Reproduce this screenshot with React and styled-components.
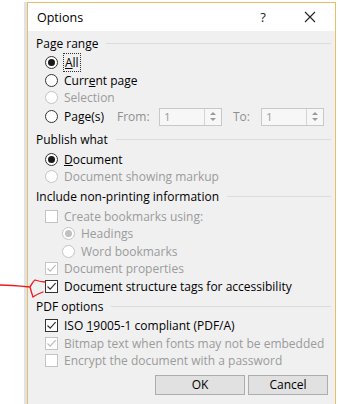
import React from "react";
import styled, { createGlobalStyle } from "styled-components";

const Global = createGlobalStyle`
  html, body {
    margin: 0;
    background: #ffffff;
    font-family: "Open Sans", "Noto Sans", sans-serif;
  }
`;

const Page = styled.div`
  position: relative;
  width: 339px;
  height: 404px;
  overflow: hidden;
  padding: 2px 0 0 24px;
  box-sizing: border-box;
`;

const Shade = styled.div`
  border-left: 3px solid #e2e2e2;
  height: 420px;
`;

const Dialog = styled.div`
  width: 309px;
  height: 420px;
  box-sizing: border-box;
  border: 1px solid #e5bf66;
  background: #f0f0f0;
`;

const TitleBar = styled.div`
  height: 28px;
  background: #ffffff;
  display: flex;
  align-items: center;
  padding: 0 0 0 9px;
  font-size: 12.5px;
  color: #000;
`;

const Title = styled.div`
  flex: 1;
`;

const TitleButton = styled.div`
  width: ${(p) => p.w}px;
  display: flex;
  justify-content: center;
  align-items: center;
  font-size: 13px;
  color: #222;
`;

const Body = styled.div`
  padding: 4px 4px 0 8px;
`;

const Group = styled.div`
  margin-top: ${(p) => p.top || 0}px;
`;

const Header = styled.div`
  height: 16px;
  display: flex;
  align-items: center;
  font-size: 12px;
  color: #000;
  margin-bottom: 3px;
  &::after {
    content: "";
    flex: 1;
    border-top: 1px solid #dcdcdc;
    margin-left: 8px;
  }
`;

const Row = styled.div`
  height: ${(p) => p.h || 17.5}px;
  display: flex;
  align-items: center;
  padding-left: ${(p) => p.indent || 9}px;
  font-size: 12px;
  color: ${(p) => (p.disabled ? "#9b9b9b" : "#000")};
  white-space: nowrap;
`;

const Label = styled.span`
  width: ${(p) => (p.w ? `${p.w}px` : "auto")};
  flex-shrink: 0;
`;

const RadioCircle = styled.span`
  width: 13px;
  height: 13px;
  box-sizing: border-box;
  border-radius: 50%;
  border: 1px solid ${(p) => (p.disabled ? "#c4c4c4" : "#333")};
  background: #fff;
  display: flex;
  align-items: center;
  justify-content: center;
  margin-right: 6px;
  flex-shrink: 0;
  &::after {
    content: "";
    display: ${(p) => (p.checked ? "block" : "none")};
    width: 7px;
    height: 7px;
    border-radius: 50%;
    background: ${(p) => (p.disabled ? "#c0c0c0" : "#1a1a1a")};
  }
`;

const Box = styled.span`
  width: 13px;
  height: 13px;
  box-sizing: border-box;
  border: 1px solid ${(p) => (p.disabled ? "#c4c4c4" : "#333")};
  background: #fff;
  display: flex;
  align-items: center;
  justify-content: center;
  margin-right: 6px;
  flex-shrink: 0;
`;

const Focus = styled.span`
  outline: 1px dotted #333;
  padding: 0 1px;
`;

const U = styled.span`
  text-decoration: underline;
`;

const Small = styled.span`
  color: #8f8f8f;
  width: ${(p) => p.w}px;
  padding-left: ${(p) => p.pl || 0}px;
  box-sizing: border-box;
  flex-shrink: 0;
`;

const Spin = styled.div`
  width: 63px;
  height: 18px;
  box-sizing: border-box;
  border: 1px solid #c8c8c8;
  background: #f7f7f7;
  display: flex;
  flex-shrink: 0;
`;

const SpinText = styled.div`
  flex: 1;
  padding-left: 4px;
  font-size: 11.5px;
  color: #9a9a9a;
  line-height: 16px;
`;

const SpinArrows = styled.div`
  width: 16px;
  border-left: 1px solid #d4d4d4;
  display: flex;
  flex-direction: column;
  align-items: center;
  justify-content: center;
  gap: 3px;
  & > span {
    width: 0;
    height: 0;
    border-left: 3px solid transparent;
    border-right: 3px solid transparent;
  }
  & > span:first-child {
    border-bottom: 3px solid #9a9a9a;
  }
  & > span:last-child {
    border-top: 3px solid #9a9a9a;
  }
`;

const Buttons = styled.div`
  display: flex;
  justify-content: flex-end;
  gap: 3px;
  margin-top: 5px;
  padding-right: 3px;
`;

const Button = styled.button`
  width: ${(p) => p.w}px;
  height: 20px;
  box-sizing: border-box;
  border: 1px solid #adadad;
  background: #e1e1e1;
  font-family: inherit;
  font-size: 12px;
  color: #000;
  padding: 0;
`;

const Arrow = styled.svg`
  position: absolute;
  left: 0;
  top: 276px;
`;

const Radio = ({ checked, disabled, indent, h, labelWidth, extra, children }) => (
  <Row disabled={disabled} indent={indent} h={h}>
    <RadioCircle checked={checked} disabled={disabled} />
    <Label w={labelWidth}>{children}</Label>
    {extra}
  </Row>
);

const Check = ({ checked, disabled, children }) => (
  <Row disabled={disabled}>
    <Box disabled={disabled}>
      {checked && (
        <svg width="11" height="11" viewBox="0 0 11 11">
          <path
            d="M1.5 5.5 L4.2 8.2 L9.6 2.2"
            fill="none"
            stroke={disabled ? "#bdbdbd" : "#333"}
            strokeWidth="1.2"
          />
        </svg>
      )}
    </Box>
    <Label>{children}</Label>
  </Row>
);

const Spinner = () => (
  <Spin>
    <SpinText>1</SpinText>
    <SpinArrows>
      <span />
      <span />
    </SpinArrows>
  </Spin>
);

export default function App() {
  return (
    <Page>
      <Global />
      <Shade>
        <Dialog>
          <TitleBar>
            <Title>Options</Title>
            <TitleButton w={44}>?</TitleButton>
            <TitleButton w={50}>
              <svg width="12" height="12" viewBox="0 0 12 12">
                <path d="M1 1 L11 11 M11 1 L1 11" stroke="#222" strokeWidth="1.1" />
              </svg>
            </TitleButton>
          </TitleBar>
          <Body>
            <Group>
              <Header>Page range</Header>
              <Radio checked>
                <Focus>
                  <U>A</U>ll
                </Focus>
              </Radio>
              <Radio>
                Curr<U>e</U>nt page
              </Radio>
              <Radio disabled>Selection</Radio>
              <Radio
                h={20}
                labelWidth={53}
                extra={
                  <>
                    <Small w={42}>From:</Small>
                    <Spinner />
                    <Small w={39} pl={11}>
                      To:
                    </Small>
                    <Spinner />
                  </>
                }
              >
                Pa<U>g</U>e(s)
              </Radio>
            </Group>
            <Group top={5}>
              <Header>Publish what</Header>
              <Radio checked>
                <U>D</U>ocument
              </Radio>
              <Radio disabled>Document showing markup</Radio>
            </Group>
            <Group top={3}>
              <Header>Include non-printing information</Header>
              <Check disabled>Create bookmarks using:</Check>
              <Radio disabled checked indent={26}>
                Headings
              </Radio>
              <Radio disabled indent={26}>
                Word bookmarks
              </Radio>
              <Check disabled checked>
                Document properties
              </Check>
              <Check checked>
                Docu<U>m</U>ent structure tags for accessibility
              </Check>
            </Group>
            <Group top={3}>
              <Header>PDF options</Header>
              <Check checked>
                ISO <U>1</U>9005-1 compliant (PDF/A)
              </Check>
              <Check disabled checked>
                Bitmap text when fonts may not be embedded
              </Check>
              <Check disabled>Encrypt the document with a password</Check>
            </Group>
            <Buttons>
              <Button w={90}>OK</Button>
              <Button w={80}>Cancel</Button>
            </Buttons>
          </Body>
        </Dialog>
      </Shade>
      <Arrow width="48" height="26" viewBox="0 0 48 26">
        <path
          d="M0 9 C10 9 20 10 30 11 C32 8 33 5 35 4 C38 5 42 6 45 6 M30 11 C31 15 32 18 33 21 C36 19 40 17 43 16"
          fill="none"
          stroke="#f01818"
          strokeWidth="1.3"
          strokeLinecap="round"
        />
      </Arrow>
    </Page>
  );
}
